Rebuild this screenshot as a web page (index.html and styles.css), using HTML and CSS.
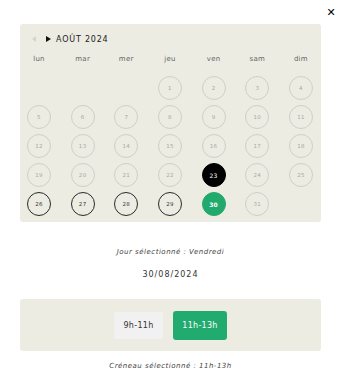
FILE: index.html
```html
<!DOCTYPE html>
<html>
<head>
    <meta charset="utf-8">
    <title>Choix du créneau</title>
    <link rel="stylesheet" href="styles.css">
</head>
<body>
    <div class="modal">
        <div class="top">
            <button class="close">✕</button>
        </div>

        <!-- Calendrier -->
        <div class="calendar">
            <div class="cal-head">
                <span class="arrow prev"></span>
                <span class="arrow next"></span>
                <span class="month">AOÛT 2024</span>
            </div>
            <div class="grid weekdays">
                <span>lun</span><span>mar</span><span>mer</span><span>jeu</span><span>ven</span><span>sam</span><span>dim</span>
            </div>
            <div class="grid days">
                <span></span><span></span><span></span>
                <span class="day">1</span><span class="day">2</span><span class="day">3</span><span class="day">4</span>
                <span class="day">5</span><span class="day">6</span><span class="day">7</span><span class="day">8</span><span class="day">9</span><span class="day">10</span><span class="day">11</span>
                <span class="day">12</span><span class="day">13</span><span class="day">14</span><span class="day">15</span><span class="day">16</span><span class="day">17</span><span class="day">18</span>
                <span class="day">19</span><span class="day">20</span><span class="day">21</span><span class="day">22</span><span class="day today">23</span><span class="day">24</span><span class="day">25</span>
                <span class="day open">26</span><span class="day open">27</span><span class="day open">28</span><span class="day open">29</span><span class="day selected">30</span><span class="day">31</span>
            </div>
        </div>

        <p class="info">Jour sélectionné : Vendredi</p>
        <p class="date">30/08/2024</p>

        <!-- Créneaux -->
        <div class="slots">
            <button class="slot">9h-11h</button>
            <button class="slot active">11h-13h</button>
        </div>

        <p class="info slot-info">Créneau sélectionné : 11h-13h</p>
    </div>
</body>
</html>
```

FILE: styles.css
```css
* { margin: 0; padding: 0; box-sizing: border-box; }
body { font-family: "DejaVu Sans", sans-serif; background: #fff; color: #333; }
.modal { width: 341px; }
.top { height: 24px; display: flex; justify-content: flex-end; align-items: center; padding-right: 4px; }
.close { background: none; border: 0; font: bold 11px "DejaVu Sans", sans-serif; color: #000; width: 12px; height: 12px; line-height: 12px; margin-top: 2px; }

.calendar { margin: 0 20px; background: #ecece3; border-radius: 3px; padding: 10px 8px 6px 7px; }
.cal-head { height: 10px; display: flex; align-items: center; padding-left: 5px; }
.arrow { width: 0; height: 0; border-top: 3px solid transparent; border-bottom: 3px solid transparent; }
.prev { border-right: 4px solid #d4d4cc; margin-right: 10px; }
.next { border-left: 5px solid #111; margin-right: 5px; }
.month { font-size: 8px; letter-spacing: 0.8px; color: #222; }

.grid { display: grid; grid-template-columns: repeat(7, 24px); justify-content: space-between; }
.weekdays { margin-top: 10px; height: 10px; line-height: 10px; font-size: 7px; color: #666; letter-spacing: 0.3px; }
.weekdays span { text-align: center; white-space: nowrap; }
.days { margin-top: 12px; row-gap: 5px; grid-auto-rows: 24px; }
.day { display: flex; align-items: center; justify-content: center; border: 1px solid #cfcfca; border-radius: 50%; font-size: 5.5px; color: #a8a8a4; letter-spacing: 0.3px; }
.day.open { border-color: #2a2a2a; color: #333; }
.day.today { background: #000; border-color: #000; color: #fff; font-size: 6px; }
.day.selected { background: #22aa6d; border-color: #22aa6d; color: #fff; font-weight: bold; font-size: 6px; }

.info { text-align: center; font-size: 7px; font-style: italic; color: #444; line-height: 10px; margin-top: 25px; letter-spacing: 0.5px; }
.date { text-align: center; font-size: 8px; color: #333; line-height: 10px; margin-top: 13px; letter-spacing: 1px; }

.slots { margin: 19px 20px 0; background: #ecece3; border-radius: 3px; height: 52px; display: flex; justify-content: center; align-items: center; gap: 10px; }
.slot { font: 8px "DejaVu Sans", sans-serif; letter-spacing: 0.3px; border: 0; border-radius: 3px; background: #f1f1f1; color: #333; width: 49px; height: 27px; }
.slot.active { background: #22ab6e; color: #fff; width: 54px; height: 29px; }

.slot-info { margin-top: 10px; }
```
